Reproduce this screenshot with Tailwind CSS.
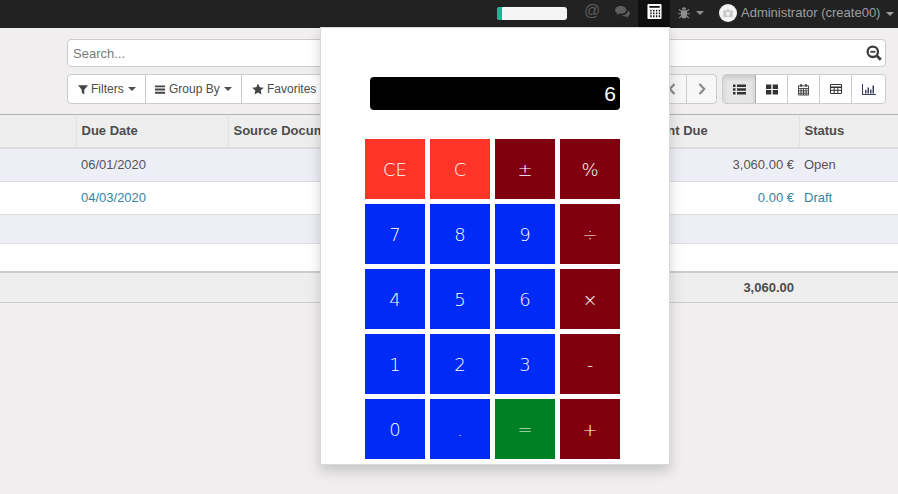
<!DOCTYPE html>
<html lang="en">
<head>
  <meta charset="UTF-8" />
  <title>Invoices - Calculator</title>
  <script src="https://cdn.jsdelivr.net/npm/@tailwindcss/browser@4"></script>
</head>
<body class="relative h-[494px] overflow-hidden bg-[#f0eeee] font-['Liberation_Sans',sans-serif] text-[13px] text-[#4c4c4c]">

  <!-- Top bar -->
  <nav class="flex h-[28px] items-start bg-[#222222] text-[#9d9d9d]">
    <div class="ml-[497px] mt-[7px] h-[13px] w-[70px] overflow-hidden rounded-[3px] bg-[#f5f5f5]">
      <div class="h-full w-[5px] bg-[#10b896]"></div>
    </div>
    <div class="ml-[18px] flex h-[22px] w-[14px] items-center justify-center text-[16px] leading-none text-[#5e5e5e]">@</div>
    <div class="ml-[15px] flex h-[24px] w-[17px] items-center justify-center text-[#5e5e5e]">
      <svg viewBox="0 0 18 16" class="h-[14px] w-[17px]" fill="currentColor"><path d="M7 1C3.400 1 .5 3 .5 5.600c0 1.500 1 2.800 2.400 3.600-.2.700-.6 1.300-1.100 1.900 1.200-.2 2.300-.7 3.200-1.400.6.100 1.300.2 2 .2 3.600 0 6.500-2 6.500-4.300S10.600 1 7 1z"/><path d="M15 6.500c0 3-3 5.200-6.800 5.300.9.900 2.300 1.400 3.800 1.400.5 0 1 0 1.400-.2.800.7 1.800 1.200 3 1.400-.5-.5-.9-1.200-1.100-1.900 1.300-.7 2.200-1.900 2.200-3.200 0-1.100-.9-2.100-2.500-2.800z"/></svg>
    </div>
    <div class="ml-[7px] flex h-[27px] w-[32px] items-start justify-center bg-[#0f0f0f] pt-[4px] text-white">
      <svg viewBox="0 0 15 16" class="h-[15px] w-[15px]"><path fill="#fff" fill-rule="evenodd" d="M1 0h13a1 1 0 0 1 1 1v14a1 1 0 0 1-1 1H1a1 1 0 0 1-1-1V1a1 1 0 0 1 1-1zM2 2v2h11V2zM3 6v2h1.500V6zm3 0v2h1.500V6zm3 0v2h1.500V6zm3 0v2h1.500V6zM3 9v2h1.500V9zm3 0v2h1.500V9zm3 0v2h1.500V9zm3 0v2h1.500V9zM3 12v2h1.500v-2zm3 0v2h1.500v-2zm3 0v2h1.500v-2zm3 0v2h1.500v-2z"/></svg>
    </div>
    <div class="ml-[8px] flex h-[25px] items-center gap-[6px] pt-[1px] text-[#8f8f8f]">
      <svg viewBox="0 0 12 12" class="h-[12px] w-[12px]" fill="currentColor"><path d="M3.800 2.500a2.200 2.200 0 0 1 4.400 0zM3 3.200h6v5c0 1.800-1.300 3.300-3 3.300s-3-1.500-3-3.300z"/><path d="M3 4.200 1 2.500M9 4.200l2-1.700M3 6.800H.4M9 6.800h2.600M3.200 9.200 1.300 11M8.800 9.200l1.900 1.800" stroke="currentColor" stroke-width="1.100" fill="none"/></svg>
      <span class="h-0 w-0 border-x-[4px] border-t-[4px] border-x-transparent border-t-[#8f8f8f]"></span>
    </div>
    <div class="ml-[15px] mt-[4px] flex h-[18px] w-[18px] items-center justify-center rounded-full bg-[#f4f4f4]">
      <svg viewBox="0 0 12 10" class="h-[8px] w-[10px]" fill="#c9c9c9"><path fill-rule="evenodd" d="M1 2h2.500L4.500.500h3L8.500 2H11a1 1 0 0 1 1 1v6a1 1 0 0 1-1 1H1a1 1 0 0 1-1-1V3a1 1 0 0 1 1-1zm5 1.500a2.500 2.500 0 1 0 0 5 2.500 2.500 0 0 0 0-5z"/></svg>
    </div>
    <span class="ml-[4px] mt-[5px] whitespace-nowrap leading-[15px]">Administrator (create00)</span>
    <span class="ml-[6px] mt-[12px] h-0 w-0 border-x-[4px] border-t-[4px] border-x-transparent border-t-[#9d9d9d]"></span>
  </nav>

  <!-- Control panel -->
  <section class="h-[87px] border-b border-[#b3b0b0] bg-[#f0eeee] pl-[67px] pt-[11px]">
    <div class="flex h-[28px] w-[819px] items-center justify-between rounded-[4px] border border-[#cccccc] bg-white pl-[5px] pr-[3px]">
      <span class="pt-[1px] text-[#7b7b7b]">Search...</span>
      <svg viewBox="0 0 16 16" class="h-[16px] w-[16px]" fill="none" stroke="#3c3c3c"><circle cx="6.800" cy="6.800" r="5.200" stroke-width="2.300"/><path d="M4.300 6.800h5" stroke-width="1.800"/><path d="m10.800 10.800 4 4" stroke-width="2.800"/></svg>
    </div>
    <div class="mt-[7px] flex h-[30px] w-[819px] items-stretch text-[12px]">
      <div class="flex overflow-hidden rounded-[4px] border border-[#cccccc] bg-white">
        <div class="flex w-[78px] items-center gap-[3px] border-r border-[#cccccc] pl-[10px]">
          <svg viewBox="0 0 12 12" class="h-[11px] w-[10px]" fill="#444"><path d="M0 1h12L7.500 6.200V12L4.500 9.800V6.200z"/></svg>
          <span>Filters</span>
          <span class="ml-[1px] h-0 w-0 border-x-[4px] border-t-[4px] border-x-transparent border-t-[#4c4c4c]"></span>
        </div>
        <div class="flex w-[96px] items-center gap-[3px] border-r border-[#cccccc] pl-[9px]">
          <svg viewBox="0 0 12 12" class="h-[11px] w-[11px]" fill="#444"><path d="M0 1.500h11v2H0zM0 5h11v2H0zM0 8.500h11v2H0z"/></svg>
          <span>Group By</span>
          <span class="ml-[1px] h-0 w-0 border-x-[4px] border-t-[4px] border-x-transparent border-t-[#4c4c4c]"></span>
        </div>
        <div class="flex w-[95px] items-center gap-[3px] pl-[10px]">
          <svg viewBox="0 0 12 12" class="h-[12px] w-[12px]" fill="#444"><path d="m6 .500 1.700 3.700 4 .5-3 2.700.8 4L6 9.500 2.500 11.400l.8-4-3-2.700 4-.5z"/></svg>
          <span>Favorites</span>
        </div>
      </div>
      <div class="ml-auto flex overflow-hidden rounded-[4px] border border-[#cccccc] bg-[#f7f7f7] text-[#999999]">
        <div class="flex w-[30px] items-center justify-center border-r border-[#cccccc]">
          <svg viewBox="0 0 8 12" class="h-[12px] w-[8px]" fill="none" stroke="#8a8a8a" stroke-width="2.200"><path d="M6.500 1 1.800 6l4.700 5"/></svg>
        </div>
        <div class="flex w-[29px] items-center justify-center">
          <svg viewBox="0 0 8 12" class="h-[12px] w-[8px]" fill="none" stroke="#8a8a8a" stroke-width="2.200"><path d="M1.500 1l4.700 5-4.700 5"/></svg>
        </div>
      </div>
      <div class="ml-[5px] flex overflow-hidden rounded-[4px] border border-[#cccccc] bg-white">
        <div class="flex w-[33px] items-center justify-center border-r border-[#adadad] bg-[#e6e6e6] shadow-[inset_0_3px_5px_rgba(0,0,0,0.125)]">
          <svg viewBox="0 0 13 11" class="h-[11px] w-[13px]" fill="#333"><path d="M0 .500h2.500V3H0zM4 .500h9V3H4zM0 4.300h2.500v2.500H0zM4 4.300h9v2.500H4zM0 8h2.500v2.500H0zM4 8h9v2.500H4z"/></svg>
        </div>
        <div class="flex w-[32px] items-center justify-center border-r border-[#cccccc]">
          <svg viewBox="0 0 12 11" class="h-[11px] w-[12px]" fill="#333"><path d="M0 .500h5.300v4.500H0zM6.700 .500H12v4.500H6.700zM0 6h5.300v4.500H0zM6.700 6H12v4.500H6.700z"/></svg>
        </div>
        <div class="flex w-[32px] items-center justify-center border-r border-[#cccccc]">
          <svg viewBox="0 0 12 13" class="h-[13px] w-[11px]" fill="none" stroke="#333"><path d="M.500 2.500h11v10H.500zM.500 5.500h11M.500 8h11M.500 10.500h11M3.300 5.500v7M6 5.500v7M8.800 5.500v7"/><path d="M3.300 .500v3M8.800 .500v3" stroke-width="1.600"/></svg>
        </div>
        <div class="flex w-[32px] items-center justify-center border-r border-[#cccccc]">
          <svg viewBox="0 0 12 10" class="h-[10px] w-[12px]" fill="none" stroke="#333"><path d="M.500 .500h11v9H.500z"/><path d="M.500 3.300h11" stroke-width="1.400"/><path d="M.500 6.300h11M4.200 3v6.500M7.800 3v6.500"/></svg>
        </div>
        <div class="flex w-[33px] items-center justify-center">
          <svg viewBox="0 0 14 11" class="h-[11px] w-[14px]" fill="#3a3f5c"><path d="M0 0h1v10h13v1H0zM3 6h1.500v3.500H3zM5.500 3.500H7v6H5.500zM8 5.500h1.500v4H8zM10.500 1.500H12v8h-1.500z"/></svg>
        </div>
      </div>
    </div>
  </section>

  <!-- List -->
  <table class="w-[898px] table-fixed border-collapse">
    <colgroup>
      <col class="w-[76px]" /><col class="w-[152px]" /><col class="w-[397px]" /><col class="w-[174px]" /><col class="w-[99px]" />
    </colgroup>
    <thead>
      <tr class="h-[33px] border-b-[2px] border-[#dddddd] bg-[#eeeeee] text-left font-bold">
        <th class="border-r border-[#e2e2e2]"></th>
        <th class="border-r border-[#e2e2e2] pl-[5px]">Due Date</th>
        <th class="border-r border-[#e2e2e2] pl-[5px]">Source Document</th>
        <th class="border-r border-[#e2e2e2] pl-[5px]">Amount Due</th>
        <th class="pl-[5px]">Status</th>
      </tr>
    </thead>
    <tbody>
      <tr class="h-[33px] border-b border-[#dddddd] bg-[#eeeef7] text-[#555555]">
        <td></td><td class="pl-[5px]">06/01/2020</td><td></td><td class="pr-[5px] text-right">3,060.00 €</td><td class="pl-[5px]">Open</td>
      </tr>
      <tr class="h-[33px] border-b border-[#dddddd] bg-white text-[#3385a5]">
        <td></td><td class="pl-[5px]">04/03/2020</td><td></td><td class="pr-[5px] text-right">0.00 €</td><td class="pl-[5px]">Draft</td>
      </tr>
      <tr class="h-[29px] border-b border-[#dddddd] bg-[#eeeef7]"><td colspan="5"></td></tr>
      <tr class="h-[29px] bg-white"><td colspan="5"></td></tr>
    </tbody>
    <tfoot>
      <tr class="h-[30px] border-y-[2px] border-b border-t-[#cccccc] border-b-[#cccccc] bg-[#eeeeee] font-bold">
        <td colspan="3"></td><td class="pr-[5px] text-right">3,060.00</td><td></td>
      </tr>
    </tfoot>
  </table>

  <!-- Calculator popup -->
  <div class="absolute left-[320px] top-[27px] h-[438px] w-[350px] border border-black/15 bg-white pl-[44px] pt-[49px] shadow-[0_6px_12px_rgba(0,0,0,0.175)]">
    <div class="ml-[5px] flex h-[33px] w-[250px] items-center justify-end rounded-[4px] bg-black pr-[4px] text-[21px] text-white">6</div>
    <div class="mt-[29px] grid w-[255px] grid-cols-[repeat(4,60px)] auto-rows-[60px] gap-[5px] font-['DejaVu_Sans',sans-serif] text-[18px] font-extralight text-white">
      <div class="flex items-center justify-center bg-[#ff3429] pt-[1px]">CE</div>
      <div class="flex items-center justify-center bg-[#ff3429] pt-[1px]">C</div>
      <div class="flex items-center justify-center bg-[#800010] pt-[1px]">±</div>
      <div class="flex items-center justify-center bg-[#800010] pt-[1px]">%</div>
      <div class="flex items-center justify-center bg-[#002bf7] pt-[1px]">7</div>
      <div class="flex items-center justify-center bg-[#002bf7] pt-[1px]">8</div>
      <div class="flex items-center justify-center bg-[#002bf7] pt-[1px]">9</div>
      <div class="flex items-center justify-center bg-[#800010] pt-[1px]">÷</div>
      <div class="flex items-center justify-center bg-[#002bf7] pt-[1px]">4</div>
      <div class="flex items-center justify-center bg-[#002bf7] pt-[1px]">5</div>
      <div class="flex items-center justify-center bg-[#002bf7] pt-[1px]">6</div>
      <div class="flex items-center justify-center bg-[#800010] pt-[1px]">×</div>
      <div class="flex items-center justify-center bg-[#002bf7] pt-[1px]">1</div>
      <div class="flex items-center justify-center bg-[#002bf7] pt-[1px]">2</div>
      <div class="flex items-center justify-center bg-[#002bf7] pt-[1px]">3</div>
      <div class="flex items-center justify-center bg-[#800010] pt-[1px]">-</div>
      <div class="flex items-center justify-center bg-[#002bf7] pt-[1px]">0</div>
      <div class="flex items-center justify-center bg-[#002bf7] pt-[1px]">.</div>
      <div class="flex items-center justify-center bg-[#008024] pt-[1px]">=</div>
      <div class="flex items-center justify-center bg-[#800010] pt-[1px]">+</div>
    </div>
  </div>
</body>
</html>
